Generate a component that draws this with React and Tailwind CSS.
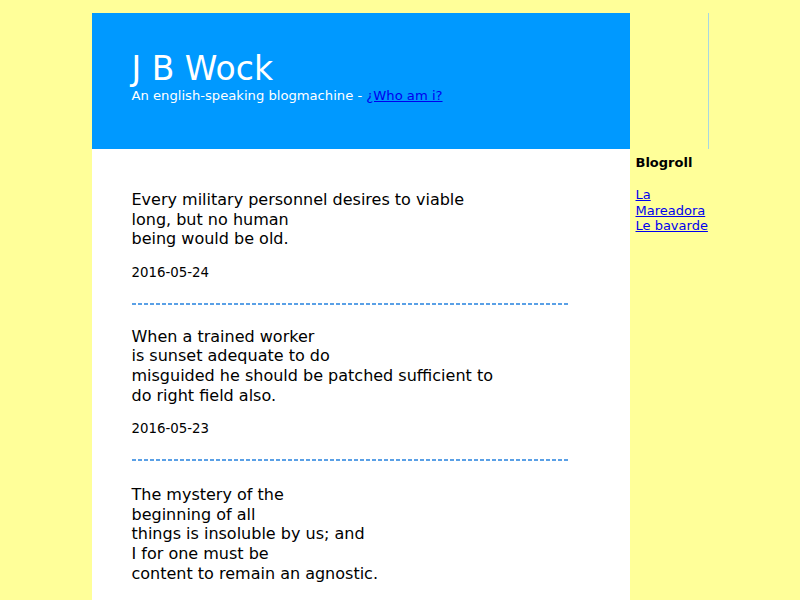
export default function App() {
  const posts = [
    {
      lines: ["Every military personnel desires to viable", "long, but no human", "being would be old."],
      date: "2016-05-24",
      gap: "",
    },
    {
      lines: ["When a trained worker", "is sunset adequate to do", "misguided he should be patched sufficient to", "do right field also."],
      date: "2016-05-23",
      gap: "mt-[22px]",
    },
    {
      lines: ["The mystery of the", "beginning of all", "things is insoluble by us; and", "I for one must be", "content to remain an agnostic."],
      date: "2016-05-22",
      gap: "mt-[24px]",
    },
  ];
  return (
    <div className="min-h-screen bg-[#ffff99] pt-[13px] font-['DejaVu_Sans',sans-serif]">
      <div className="mx-auto w-[617px] flex">
        <div className="w-[538px] shrink-0">
          <div className="h-[136px] bg-[#0099ff] pt-[37px] pl-[40px] text-white">
            <h1 className="text-[33px] leading-[38px]">J B Wock</h1>
            <div className="text-[13.15px] leading-[16px]">
              An english-speaking blogmachine -{" "}
              <a href="#" className="text-[#0000ee] underline">¿Who am i?</a>
            </div>
          </div>
          <div className="bg-white pt-[41px] pl-[40px] pr-[40px] pb-[40px] min-h-[600px] text-black">
            {posts.map((p, i) => (
              <div key={i} className={p.gap}>
                <p className="text-[16px] leading-[19.6px]">
                  {p.lines.map((l, j) => (
                    <span key={j}>
                      {l}
                      {j < p.lines.length - 1 && <br />}
                    </span>
                  ))}
                </p>
                <div className="mt-[16px] text-[13.33px] leading-[16px]">{p.date}</div>
                <div className="mt-[22px] h-[2px] w-[436px] bg-[repeating-linear-gradient(90deg,#5aa0e6_0px,#5aa0e6_4px,transparent_4px,transparent_6px)]" />
              </div>
            ))}
          </div>
        </div>
        <div className="w-[79px] shrink-0">
          <div className="h-[136px] border-r border-[#a8d8e0]" />
          <div className="pl-[6px] pt-[6px] text-[13px] leading-[16px] text-black">
            <div className="font-bold">Blogroll</div>
            <div className="mt-[16px] leading-[15.5px]">
              <a href="#" className="text-[#0000ee] underline">La Mareadora</a>
              <br />
              <a href="#" className="text-[#0000ee] underline">Le bavarde</a>
            </div>
          </div>
        </div>
      </div>
    </div>
  );
}
